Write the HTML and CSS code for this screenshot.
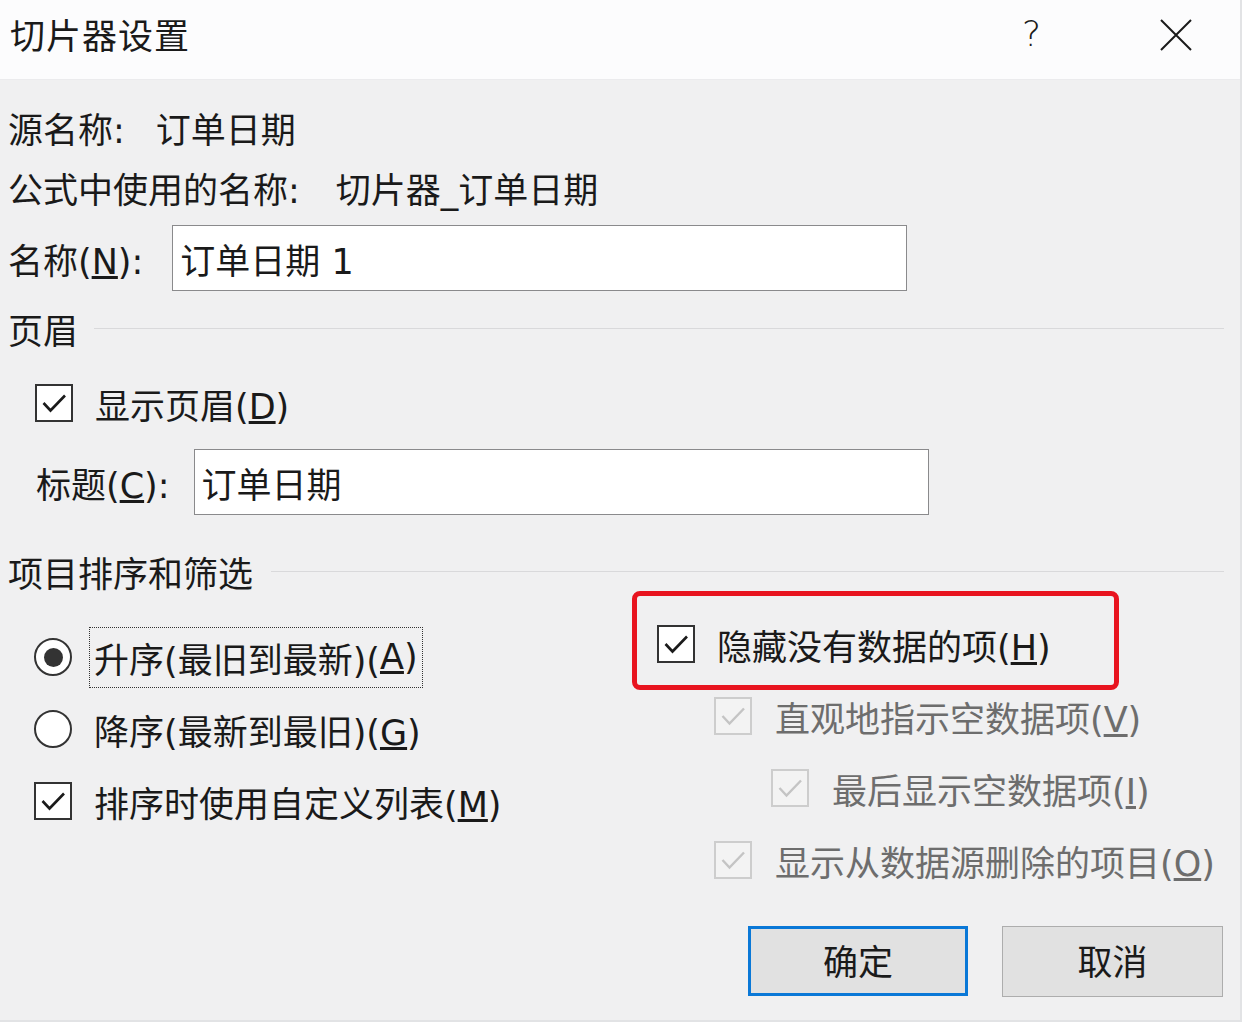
FILE: index.html
```html
<!DOCTYPE html>
<html>
  <head>
    <title>切片器设置</title>
    <meta charset="utf-8">
    <link rel="stylesheet" href="styles.css">
  </head>
  <body>
    <div class="dialog">
      <div class="titlebar">
        <span class="title">切片器设置</span>
        <span class="help">?</span>
        <span class="close">
          <svg width="32" height="32" viewBox="0 0 32 32"><path d="M1 1 L31 31 M31 1 L1 31" stroke="#1a1a1a" stroke-width="2" fill="none"/></svg>
        </span>
      </div>

      <div class="content">
        <div class="row info">
          <span class="label">源名称:</span>
          <span class="value src">订单日期</span>
        </div>
        <div class="row info">
          <span class="label">公式中使用的名称:</span>
          <span class="value formula">切片器_订单日期</span>
        </div>
        <div class="row field name-row">
          <label class="label">名称(<u>N</u>):</label>
          <div class="textbox name-box">订单日期 1</div>
        </div>

        <div class="group head-group">
          <span>页眉</span>
          <span class="rule"></span>
        </div>
        <div class="row check-row show-head">
          <span class="check"><svg width="34" height="34" viewBox="0 0 34 34"><path d="M6.5 17 L13.5 24.5 L28 9.5" stroke="#1a1a1a" stroke-width="2.6" fill="none"/></svg></span>
          <span>显示页眉(<u>D</u>)</span>
        </div>
        <div class="row field caption-row">
          <label class="label">标题(<u>C</u>):</label>
          <div class="textbox caption-box">订单日期</div>
        </div>

        <div class="group sort-group">
          <span>项目排序和筛选</span>
          <span class="rule"></span>
        </div>

        <div class="options">
          <div class="left-col">
            <div class="opt">
              <span class="radio on"><span class="dot"></span></span>
              <span class="focus">升序(最旧到最新)(<u>A</u>)</span>
            </div>
            <div class="opt">
              <span class="radio"></span>
              <span class="txt">降序(最新到最旧)(<u>G</u>)</span>
            </div>
            <div class="opt">
              <span class="check"><svg width="34" height="34" viewBox="0 0 34 34"><path d="M6.5 17 L13.5 24.5 L28 9.5" stroke="#1a1a1a" stroke-width="2.6" fill="none"/></svg></span>
              <span class="txt">排序时使用自定义列表(<u>M</u>)</span>
            </div>
          </div>
          <div class="right-col">
            <div class="opt first">
              <span class="highlight"></span>
              <span class="check"><svg width="34" height="34" viewBox="0 0 34 34"><path d="M6.5 17 L13.5 24.5 L28 9.5" stroke="#1a1a1a" stroke-width="2.6" fill="none"/></svg></span>
              <span class="txt">隐藏没有数据的项(<u>H</u>)</span>
            </div>
            <div class="opt disabled indent1">
              <span class="check"><svg width="34" height="34" viewBox="0 0 34 34"><path d="M6.5 17 L13.5 24.5 L28 9.5" stroke="#c4c4c4" stroke-width="2.4" fill="none"/></svg></span>
              <span class="txt">直观地指示空数据项(<u>V</u>)</span>
            </div>
            <div class="opt disabled indent2">
              <span class="check"><svg width="34" height="34" viewBox="0 0 34 34"><path d="M6.5 17 L13.5 24.5 L28 9.5" stroke="#c4c4c4" stroke-width="2.4" fill="none"/></svg></span>
              <span class="txt">最后显示空数据项(<u>I</u>)</span>
            </div>
            <div class="opt disabled indent1">
              <span class="check"><svg width="34" height="34" viewBox="0 0 34 34"><path d="M6.5 17 L13.5 24.5 L28 9.5" stroke="#c4c4c4" stroke-width="2.4" fill="none"/></svg></span>
              <span class="txt">显示从数据源删除的项目(<u>O</u>)</span>
            </div>
          </div>
        </div>

        <div class="buttons">
          <button class="btn default">确定</button>
          <button class="btn">取消</button>
        </div>
      </div>
    </div>
  </body>
</html>
```

FILE: styles.css
```css
body { margin: 0; background: #f0f0f0; font-family: "DejaVu Sans", "Noto Sans CJK SC", sans-serif; color: #1a1a1a; }

.dialog { width: 1242px; height: 1022px; box-sizing: border-box; border-right: 2px solid #e2e3e5; border-bottom: 2px solid #e2e3e5; background: #f0f0f1; overflow: hidden; }

.titlebar { height: 80px; background: #fcfcfd; border-bottom: 1px solid #ebebed; display: flex; align-items: center; padding: 0 0 12px 10px; box-sizing: border-box; }
.title { font-size: 35px; flex-grow: 1; letter-spacing: 1px; font-family: "Noto Sans CJK SC", sans-serif; }
.help { font-size: 36px; font-weight: 300; font-family: "DejaVu Sans", sans-serif; width: 14px; margin-right: 124px; line-height: 1; }
.close { width: 32px; height: 32px; margin-right: 48px; display: flex; margin-top: 2px; }

.content { padding: 17px 16px 0 8px; font-size: 35px; }

.row { display: flex; align-items: center; }
.info { height: 60px; }
.src { margin-left: 31px; }
.formula { margin-left: 36px; }

.field { height: 66px; }
.name-row { margin-top: 8px; }
.textbox { height: 66px; box-sizing: border-box; border: 1px solid #8a8a8c; background: #fff; display: flex; align-items: center; padding-left: 7px; }
.name-box { width: 735px; margin-left: 29px; }

.group { display: flex; align-items: center; }
.group .rule { flex-grow: 1; height: 1px; background: #d9d9db; }
.head-group { height: 60px; margin-top: 7px; }
.head-group .rule { margin-left: 16px; }
.show-head { height: 90px; padding-left: 27px; }
.caption-row { margin-top: 1px; padding-left: 28px; }
.caption-box { width: 735px; margin-left: 24px; }
.sort-group { height: 40px; margin-top: 36px; }
.sort-group .rule { margin-left: 18px; }

.check { width: 38px; height: 38px; box-sizing: border-box; border: 2px solid #333; background: #fff; display: flex; align-items: center; justify-content: center; flex-shrink: 0; }
.check + span { margin-left: 22px; }

.radio { width: 38px; height: 38px; box-sizing: border-box; border: 2px solid #333; border-radius: 50%; background: #fff; display: flex; align-items: center; justify-content: center; flex-shrink: 0; }
.radio .dot { width: 19px; height: 19px; border-radius: 50%; background: #333; }

.options { display: grid; grid-template-columns: 624px 1fr; }
.left-col { padding-top: 30px; padding-left: 26px; }
.right-col { padding-top: 17px; }

.opt { height: 72px; display: flex; align-items: center; position: relative; }
.radio + span { margin-left: 17px; }
.focus { border: 1px dotted #333; padding: 0 4px; height: 59px; display: flex; align-items: center; }
.radio + .txt { margin-left: 22px; }

.first { padding-left: 25px; }
.highlight { position: absolute; left: 0; top: -17px; bottom: -10px; width: 487px; box-sizing: border-box; border: 5px solid #e8141f; border-radius: 8px; }
.indent1 { padding-left: 82px; }
.indent2 { padding-left: 139px; }
.disabled { color: #6d6d6d; }
.disabled .check { border-color: #cdcdcd; background: #f3f3f3; }
.disabled .check + span { margin-left: 23px; }

.buttons { display: flex; justify-content: flex-end; gap: 34px; margin-top: 30px; padding-right: 1px; }
.btn { width: 221px; height: 71px; font-family: "Noto Sans CJK SC", sans-serif; font-size: 35px; color: #1a1a1a; background: #e1e1e1; border: 1px solid #adadad; padding: 0 0 4px; }
.btn.default { border: 3px solid #0a78d7; width: 220px; height: 70px; }
```
